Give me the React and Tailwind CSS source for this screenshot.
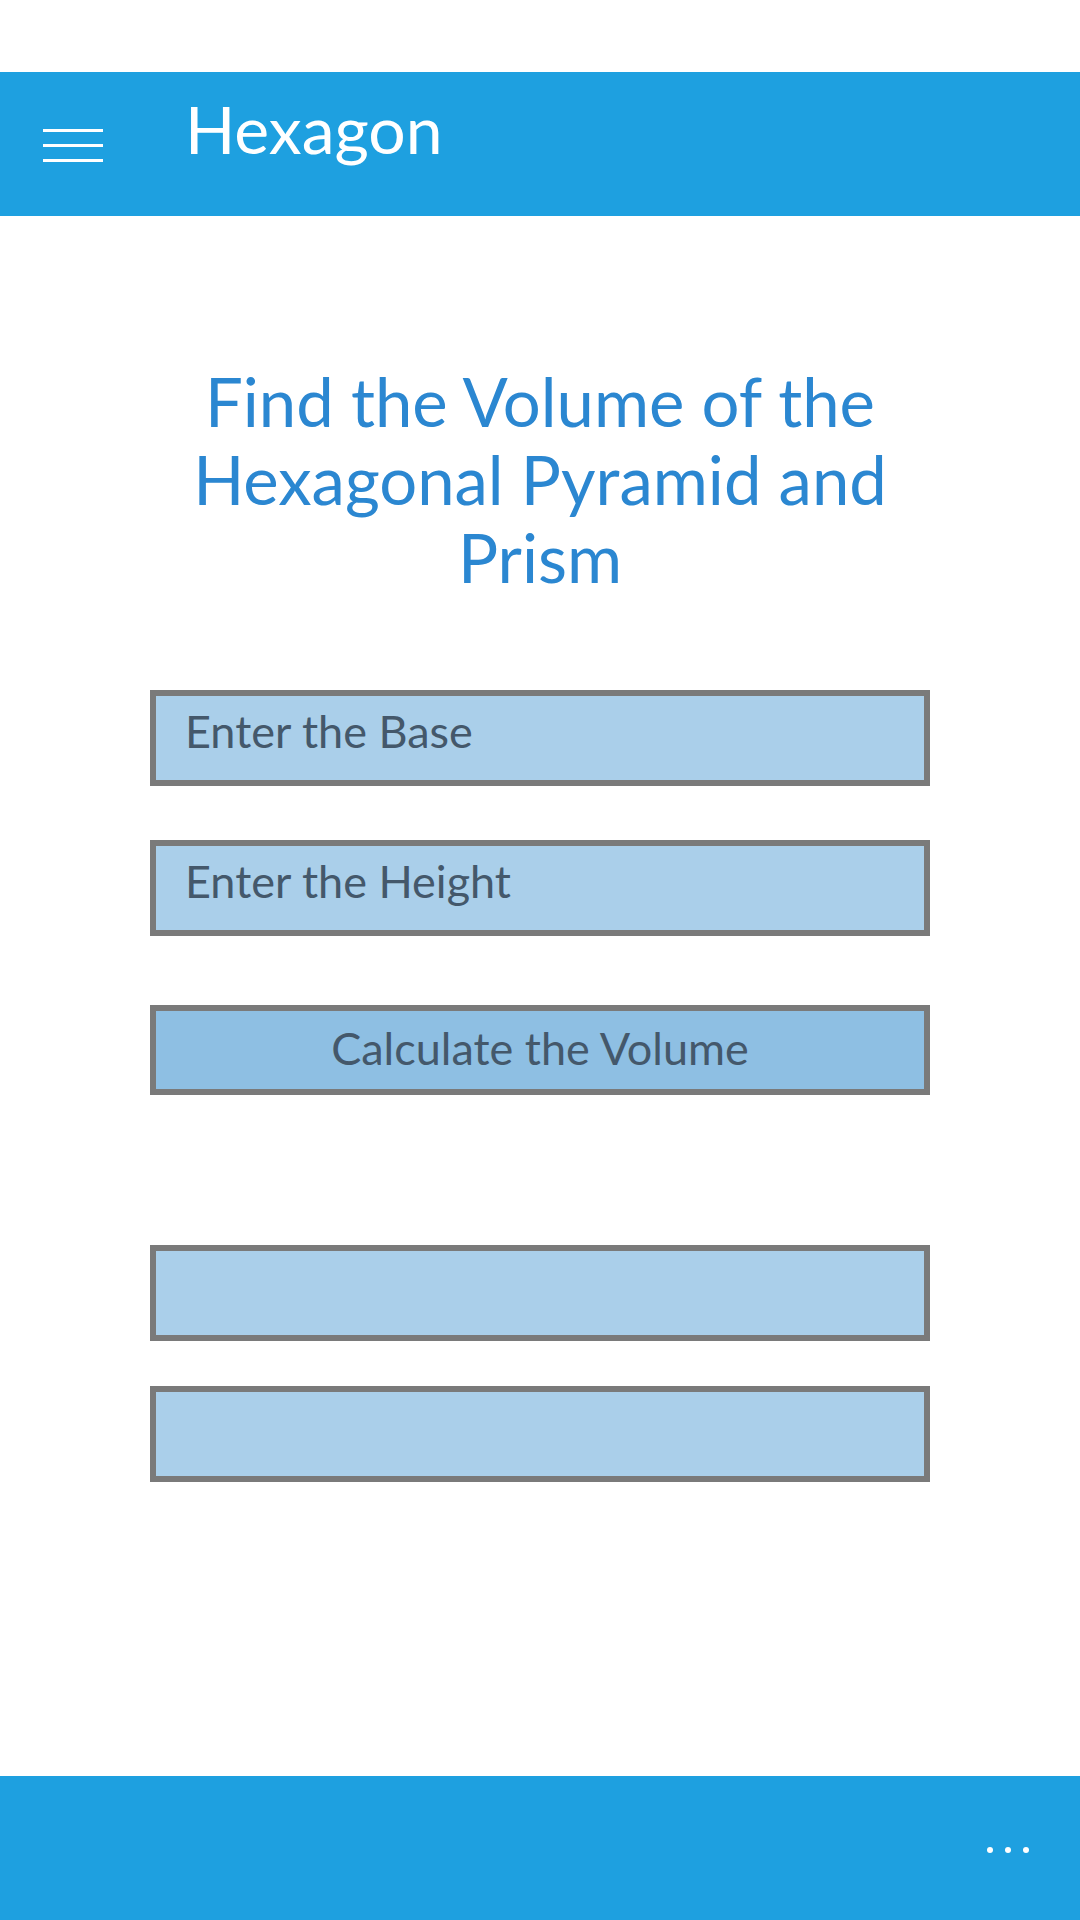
// Hexagon volume calculator screen
import { useState } from 'react';

const fieldClass =
  "w-[780px] h-[96px] box-border border-[6px] border-[#7a7a7a] bg-[#aacfea] pl-[29px] pt-0 pb-[14px] text-[45px] text-[#44586b] placeholder:text-[#44586b] placeholder:opacity-100 outline-none";

export default function App() {
  const [base, setBase] = useState('');
  const [height, setHeight] = useState('');
  const [pyramid, setPyramid] = useState('');
  const [prism, setPrism] = useState('');

  const calculate = () => {
    const b = parseFloat(base);
    const h = parseFloat(height);
    if (isNaN(b) || isNaN(h)) return;
    const area = (3 * Math.sqrt(3) / 2) * b * b;
    setPyramid(`Pyramid: ${(area * h / 3).toFixed(2)}`);
    setPrism(`Prism: ${(area * h).toFixed(2)}`);
  };

  return (
    <div className="w-[1080px] h-[1920px] flex flex-col bg-white font-['Lato','Liberation_Sans',sans-serif]">
      {/* status bar space */}
      <div className="h-[72px] shrink-0" />

      {/* Header */}
      <header className="h-[144px] shrink-0 bg-[#1ea0e0] flex items-start">
        <div className="ml-[43px] mt-[57px] w-[60px] flex flex-col gap-[12px]">
          <span className="block h-[3px] bg-white" />
          <span className="block h-[3px] bg-white" />
          <span className="block h-[3px] bg-white" />
        </div>
        <h2 className="ml-[82px] mt-[24px] text-[66px] leading-[66px] text-white">Hexagon</h2>
      </header>

      {/* Content */}
      <main className="flex-1 flex flex-col items-center">
        <h1 className="mt-[146px] w-[780px] text-center text-[67px] leading-[78px] text-[#2b87d1]">
          Find the Volume of the Hexagonal Pyramid and Prism
        </h1>

        <input
          className={`mt-[94px] ${fieldClass}`}
          placeholder="Enter the Base"
          value={base}
          onChange={(e) => setBase(e.target.value)}
        />
        <input
          className={`mt-[54px] ${fieldClass}`}
          placeholder="Enter the Height"
          value={height}
          onChange={(e) => setHeight(e.target.value)}
        />

        <button
          onClick={calculate}
          className="mt-[69px] w-[780px] h-[90px] box-border border-[6px] border-[#7a7a7a] bg-[#8ebfe3] text-[45px] leading-none text-[#44586b] flex items-center justify-center pb-[3px]"
        >
          Calculate the Volume
        </button>

        <input readOnly className={`mt-[150px] ${fieldClass}`} value={pyramid} />
        <input readOnly className={`mt-[45px] ${fieldClass}`} value={prism} />
      </main>

      {/* App bar */}
      <footer className="h-[144px] shrink-0 bg-[#1ea0e0] flex justify-end items-start pt-[71px] pr-[51px] gap-[12px]">
        <span className="block w-[6px] h-[6px] rounded-full bg-white" />
        <span className="block w-[6px] h-[6px] rounded-full bg-white" />
        <span className="block w-[6px] h-[6px] rounded-full bg-white" />
      </footer>
    </div>
  );
}
